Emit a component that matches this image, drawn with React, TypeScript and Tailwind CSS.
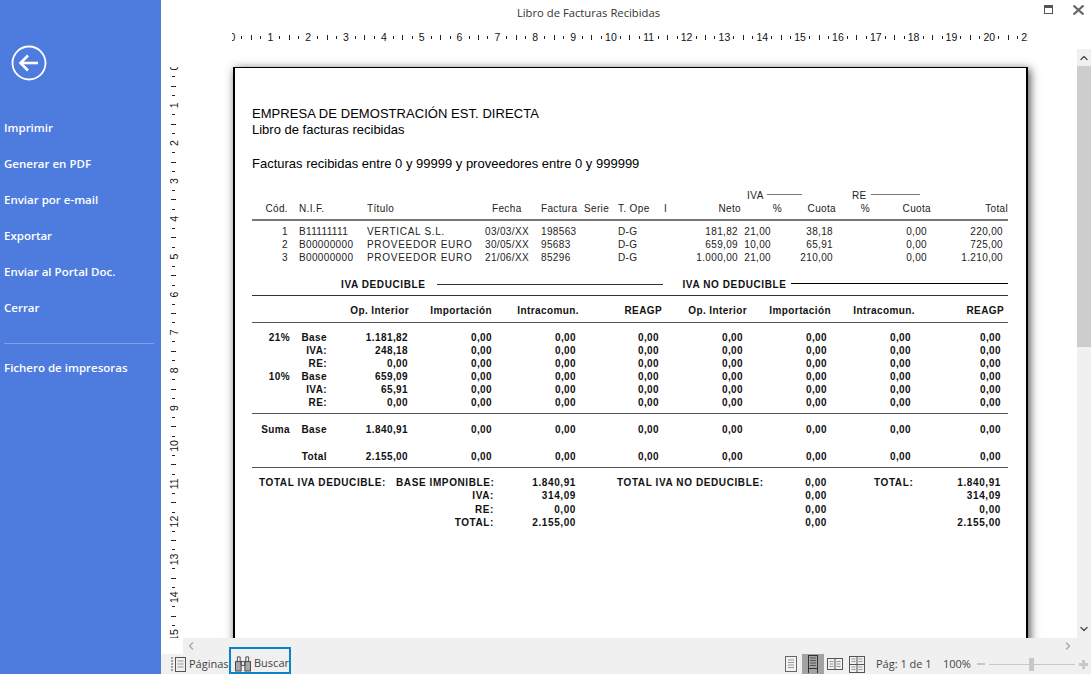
import { ChevronLeft, ChevronRight, ChevronUp, ChevronDown } from 'lucide-react'

const menuTop = ['Imprimir', 'Generar en PDF', 'Enviar por e-mail', 'Exportar', 'Enviar al Portal Doc.', 'Cerrar']

const CM = 37.84

function HorizontalRuler() {
  const ticks = Array.from({ length: 85 }, (_, i) => i)
  return (
    <svg width={800} height={16} className="block">
      {ticks.map((i) =>
        i % 4 === 0 ? (
          <text key={i} x={(i / 4) * CM + 0.5} y={12} fontSize={10.5} textAnchor="middle" fill="#111" fontFamily="Liberation Sans">
            {i / 4}
          </text>
        ) : (
          <rect key={i} x={Math.round((i / 4) * CM)} y={i % 2 ? 7 : 6} width={1} height={i % 2 ? 3 : 5} fill="#222" />
        ),
      )}
    </svg>
  )
}

function VerticalRuler() {
  const ticks = Array.from({ length: 64 }, (_, i) => i)
  return (
    <svg width={16} height={590} className="block">
      {ticks.map((i) =>
        i % 4 === 0 ? (
          <text
            key={i}
            transform={`translate(12 ${(i / 4) * CM + 0.5}) rotate(-90)`}
            fontSize={10.5}
            textAnchor="middle"
            fill="#111"
            fontFamily="Liberation Sans"
          >
            {i / 4}
          </text>
        ) : (
          <rect key={i} x={i % 2 ? 6 : 5} y={Math.round((i / 4) * CM)} width={i % 2 ? 3 : 5} height={1} fill="#222" />
        ),
      )}
    </svg>
  )
}

// fixed columns of the invoice list
const listCols = 'grid grid-cols-[36px_11px_68px_118px_56px_43px_34px_46px_10px_67px_41px_54px_34px_61px_77px]'
// fixed columns of the tax summary
const sumCols = 'grid-cols-[38px_37px_81px_84px_84px_83px_84px_84px_84px_90px]'
const sumHeadCols = 'grid-cols-[38px_37px_82px_83px_87px_83px_85px_84px_84px_89px]'

function ListHead() {
  const right = [0, 9, 10, 11, 12, 13, 14]
  const cols = ['Cód.', '', 'N.I.F.', 'Título', 'Fecha', 'Factura', 'Serie', 'T. Ope', 'I', 'Neto', '%', 'Cuota', '%', 'Cuota', 'Total']
  return (
    <div className={`${listCols} h-[13px] leading-[13px] whitespace-nowrap tracking-[0.35px]`}>
      {cols.map((t, i) => (
        <span key={i} className={right.includes(i) ? 'text-right' : t === 'Fecha' ? 'pl-[7px]' : ''}>
          {t}
        </span>
      ))}
    </div>
  )
}

function ListValues({ c }: { c: string[] }) {
  return (
    <div className={`${listCols} h-[13px] leading-[13px] whitespace-nowrap tracking-[0.35px]`}>
      <span className="text-right">{c[0]}</span>
      <span />
      <span>{c[1]}</span>
      <span className="tracking-[0.7px] overflow-hidden">{c[2]}</span>
      <span>{c[3]}</span>
      <span>{c[4]}</span>
      <span />
      <span>D-G</span>
      <span />
      <span className="text-right pr-[3px]">{c[5]}</span>
      <span className="text-right pr-[11px]">{c[6]}</span>
      <span className="text-right pr-[3px]">{c[7]}</span>
      <span />
      <span className="text-right pr-1">0,00</span>
      <span className="text-right pr-[5px]">{c[8]}</span>
    </div>
  )
}

function SumRow({ a = '', b = '', v, h = 'h-[13px]', head = false }: { a?: string; b?: string; v: string[]; h?: string; head?: boolean }) {
  return (
    <div className={`grid ${head ? sumHeadCols : sumCols} ${h} leading-[13px] font-bold whitespace-nowrap`}>
      <span className="text-right">{a}</span>
      <span className="text-right">{b}</span>
      {v.map((t, i) => (
        <span key={i} className="text-right">
          {t}
        </span>
      ))}
    </div>
  )
}

const zeros = (n: number) => Array.from({ length: n }, () => '0,00')

function TotalRow({ a, b, c, d, e, f }: { a?: string; b: string; c: string; d?: string; e: string; f: string }) {
  return (
    <div className="grid grid-cols-[137px_98px_82px_195px_56px_110px_64px] h-[13.4px] leading-[13px] font-bold whitespace-nowrap pl-[7px] tracking-[0.6px]">
      <span>{a}</span>
      <span className="text-right">{b}</span>
      <span className="text-right">{c}</span>
      <span className="pl-[41px]">{d}</span>
      <span className="text-right">{e}</span>
      <span className="pl-[47px]">{d ? 'TOTAL:' : ''}</span>
      <span className="text-right">{f}</span>
    </div>
  )
}

function Page() {
  return (
    <div className="w-[795px] h-[800px] shrink-0 bg-white border-2 border-t border-black shadow-[2px_2px_9px_rgba(0,0,0,0.7)] pl-[17px] pt-[38px] font-['Liberation_Sans',sans-serif] text-black">
      <div className="w-[756px]">
        <div className="text-[13px] leading-[16px] tracking-[0.05px]">EMPRESA DE DEMOSTRACIÓN EST. DIRECTA</div>
        <div className="text-[13px] leading-[16px]">Libro de facturas recibidas</div>
        <div className="text-[13px] leading-[16px] mt-[18px]">Facturas recibidas entre 0 y 99999 y proveedores entre 0 y 999999</div>

        <div className="text-[10px] text-[#222] mt-[17px]">
          <div className="flex h-[13px] items-center leading-[13px] tracking-[0.5px]">
            <span className="ml-[495px]">IVA</span>
            <span className="ml-[3px] w-[35px] h-px bg-[#777] -mt-[3px]" />
            <span className="ml-[50px]">RE</span>
            <span className="ml-[4px] w-[49px] h-px bg-[#777] -mt-[3px]" />
          </div>
          <ListHead />
        </div>
        <div className="h-[2px] bg-[#777] mt-[4px]" />
        <div className="text-[10px] text-[#222] mt-[4px]">
          <ListValues c={['1', 'B11111111', 'VERTICAL S.L.', '03/03/XX', '198563', '181,82', '21,00', '38,18', '220,00']} />
          <ListValues c={['2', 'B00000000', 'PROVEEDOR EURO', '30/05/XX', '95683', '659,09', '10,00', '65,91', '725,00']} />
          <ListValues c={['3', 'B00000000', 'PROVEEDOR EURO', '21/06/XX', '85296', '1.000,00', '21,00', '210,00', '1.210,00']} />
        </div>

        <div className="flex items-center h-[13px] leading-[13px] mt-[14px] text-[10px] font-bold text-[#111] tracking-[0.6px]">
          <span className="ml-[89px]">IVA DEDUCIBLE</span>
          <span className="ml-[12px] w-[226px] h-px bg-[#333]" />
          <span className="ml-[19px]">IVA NO DEDUCIBLE</span>
          <span className="ml-[4px] flex-1 h-px bg-black -mt-[3px]" />
        </div>
        <div className="h-px bg-[#333] mt-[4px]" />

        <div className="text-[10px] text-[#111] mt-[8px] tracking-[0.4px]">
          <SumRow head v={['Op. Interior', 'Importación', 'Intracomun.', 'REAGP', 'Op. Interior', 'Importación', 'Intracomun.', 'REAGP']} />
          <div className="h-px bg-[#555] mt-[5px] mb-[8px]" />
          <SumRow a="21%" b="Base" v={['1.181,82', ...zeros(7)]} />
          <SumRow b="IVA:" v={['248,18', ...zeros(7)]} />
          <SumRow b="RE:" v={zeros(8)} />
          <SumRow a="10%" b="Base" v={['659,09', ...zeros(7)]} />
          <SumRow b="IVA:" v={['65,91', ...zeros(7)]} />
          <SumRow b="RE:" v={zeros(8)} h="h-[14px]" />
          <div className="h-px bg-[#555] mt-[3px] mb-[9px]" />
          <SumRow a="Suma" b="Base" v={['1.840,91', ...zeros(7)]} h="h-[27px]" />
          <SumRow b="Total" v={['2.155,00', ...zeros(7)]} />
          <div className="h-px bg-[#555] mt-[4px] mb-[8px]" />
          <TotalRow a="TOTAL IVA DEDUCIBLE:" b="BASE IMPONIBLE:" c="1.840,91" d="TOTAL IVA NO DEDUCIBLE:" e="0,00" f="1.840,91" />
          <TotalRow b="IVA:" c="314,09" e="0,00" f="314,09" />
          <TotalRow b="RE:" c="0,00" e="0,00" f="0,00" />
          <TotalRow b="TOTAL:" c="2.155,00" e="0,00" f="2.155,00" />
        </div>
      </div>
    </div>
  )
}

function ViewIcon({ kind }: { kind: number }) {
  const stroke = '#555'
  if (kind === 0)
    return (
      <svg width={14} height={16} viewBox="0 0 14 16" fill="none" stroke="#666">
        <rect x={1.5} y={0.5} width={11} height={15} />
        <path d="M4 4h6M4 6.5h6M4 9h6M4 11.5h6" stroke="#999" />
      </svg>
    )
  if (kind === 1)
    return (
      <svg width={14} height={18} viewBox="0 0 14 18" fill="none" stroke="#333">
        <rect x={2.5} y={0.5} width={9} height={13} />
        <path d="M4 3h6M4 5.5h6M4 8h6M4 10.5h6" stroke="#555" />
        <path d="M2.5 14v4M11.5 14v4" />
      </svg>
    )
  if (kind === 2)
    return (
      <svg width={16} height={12} viewBox="0 0 16 12" fill="none" stroke={stroke}>
        <rect x={0.5} y={0.5} width={15} height={11} />
        <path d="M8 0v12" />
        <path d="M2.5 3.5h4M2.5 6h4M2.5 8.5h4M9.5 3.5h4M9.5 6h4M9.5 8.5h4" stroke="#999" />
      </svg>
    )
  return (
    <svg width={16} height={17} viewBox="0 0 16 17" fill="none" stroke={stroke}>
      <rect x={0.5} y={0.5} width={15} height={16} />
      <path d="M8 0v17M0 8.5h16" />
      <path d="M2.5 3h4M2.5 5.5h4M9.5 3h4M9.5 5.5h4M2.5 11h4M2.5 13.5h4M9.5 11h4M9.5 13.5h4" stroke="#999" />
    </svg>
  )
}

export default function App() {
  return (
    <div className="h-[674px] w-[1091px] flex bg-white overflow-hidden font-['Open_Sans',sans-serif]">
      <aside className="w-[161px] shrink-0 bg-[#4d7cde] text-white flex flex-col">
        <div className="pl-[11px] pt-[45px] h-[110px]">
          <svg width={36} height={36} viewBox="0 0 36 36" fill="none" stroke="white">
            <circle cx={18} cy={18} r={16.5} strokeWidth={1.8} />
            <path d="M9.5 18h17.5" strokeWidth={2.6} />
            <path d="M17 10.5 9.5 18l7.5 7.5" strokeWidth={2.6} />
          </svg>
        </div>
        <nav className="flex flex-col">
          {menuTop.map((m) => (
            <div key={m} className="h-[36px] pl-1 flex items-center text-[11.5px] font-semibold">
              {m}
            </div>
          ))}
        </nav>
        <div className="h-px bg-[#7fa1e8] ml-1 mr-[7px] mt-[17px]" />
        <div className="h-[48px] pl-1 flex items-center text-[11.5px] font-semibold">Fichero de impresoras</div>
      </aside>

      <main className="flex-1 min-w-0 flex flex-col">
        <header className="h-[27px] shrink-0 flex items-center">
          <div className="flex-1 text-center text-[11.25px] text-[#333] -mt-[1px] pr-[13px]">Libro de Facturas Recibidas</div>
          <div className="flex items-center w-[62px] shrink-0 -mt-[8px]">
            <svg width={10} height={10} viewBox="0 0 10 10" fill="none" stroke="#555" className="ml-[15px]">
              <rect x={0.5} y={0.5} width={8} height={8} />
              <path d="M0 2h9" strokeWidth={2} />
            </svg>
            <svg width={11} height={10} viewBox="0 0 11 10" fill="none" stroke="#666" strokeWidth={2.2} className="ml-[19px]">
              <path d="M0.5 0.5 10.5 9.5M10.5 0.5 0.5 9.5" />
            </svg>
          </div>
        </header>
        <div className="h-[18px] shrink-0 pl-[71px] pt-[2px] overflow-hidden">
          <div className="w-[796px] overflow-hidden">
            <HorizontalRuler />
          </div>
        </div>
        <div className="flex-1 min-h-0 flex">
          <div className="flex-1 min-w-0 flex overflow-hidden pt-[22px]">
            <div className="w-[72px] shrink-0 pl-[5px]">
              <VerticalRuler />
            </div>
            <Page />
          </div>
          <div className="w-[14px] shrink-0 bg-[#f0f0f0] flex flex-col mt-[4px]">
            <div className="h-[17px] flex items-center justify-center">
              <ChevronUp size={12} strokeWidth={3} className="text-[#555]" />
            </div>
            <div className="h-[281px] bg-[#cdcdcd]" />
            <div className="flex-1 flex items-end justify-center pb-[3px]">
              <ChevronDown size={12} strokeWidth={3} className="text-[#555]" />
            </div>
          </div>
        </div>
        <div className="h-[16px] shrink-0 flex">
          <div className="w-[22px] bg-white" />
          <div className="flex-1 bg-[#f0f0f0] flex items-center justify-between pl-[2px] pr-[17px]">
            <ChevronLeft size={12} strokeWidth={3} className="text-[#aaa]" />
            <ChevronRight size={12} strokeWidth={3} className="text-[#aaa]" />
          </div>
        </div>
        <footer className="h-[20px] shrink-0 bg-[#f0f0f0] flex items-center text-[11px] text-[#444]">
          <svg width={16} height={15} viewBox="0 0 16 15" fill="none" stroke="#555" className="ml-[10px]">
            <path d="M0 1h2M0 4h2M0 7h2M0 10h2M0 13h2" />
            <rect x={4.5} y={0.5} width={10} height={14} />
            <path d="M6.5 4h6M6.5 7h6M6.5 10h6" stroke="#999" />
          </svg>
          <span className="ml-[2px] w-[40px]">Páginas</span>
          <div className="h-[27px] -mt-[7px] w-[62px] border-[2px] border-[#0a84c6] flex items-center pt-[5px] pl-[4px]">
            <svg width={17} height={17} viewBox="0 0 17 17" fill="#a8a8a8" stroke="#444">
              <rect x={0.5} y={6.5} width={6} height={10} />
              <rect x={10.5} y={6.5} width={6} height={10} />
              <path d="M2.5 6.5v-5h3v5M11.5 6.5v-5h3v5" fill="none" />
              <path d="M6.5 6.5h4v4h-4z" fill="none" />
            </svg>
            <span className="ml-[3px]">Buscar</span>
          </div>
          <div className="flex-1" />
          <div className="flex items-center h-full">
            <div className="w-[14px] flex justify-center mr-[4px]"><ViewIcon kind={0} /></div>
            <div className="w-[22px] h-[20px] bg-[#a3a3a3] flex items-center justify-center mr-[3px]"><ViewIcon kind={1} /></div>
            <div className="w-[16px] flex justify-center mr-[6px]"><ViewIcon kind={2} /></div>
            <div className="w-[16px] flex justify-center"><ViewIcon kind={3} /></div>
            <span className="ml-[11px] w-[67px]">Pág: 1 de 1</span>
            <span className="w-[34px]">100%</span>
            <div className="w-[8px] h-[2px] bg-[#c8c8c8]" />
            <div className="relative w-[86px] h-px bg-[#c8c8c8] mx-[4px]">
              <div className="absolute left-[40px] -top-[6px] w-[5px] h-[13px] bg-[#c8c8c8]" />
            </div>
            <div className="relative w-[9px] h-[9px] mr-[3px]">
              <div className="absolute top-[3px] left-0 w-[9px] h-[3px] bg-[#c8c8c8]" />
              <div className="absolute left-[3px] top-0 w-[3px] h-[9px] bg-[#c8c8c8]" />
            </div>
          </div>
        </footer>
      </main>
    </div>
  )
}
